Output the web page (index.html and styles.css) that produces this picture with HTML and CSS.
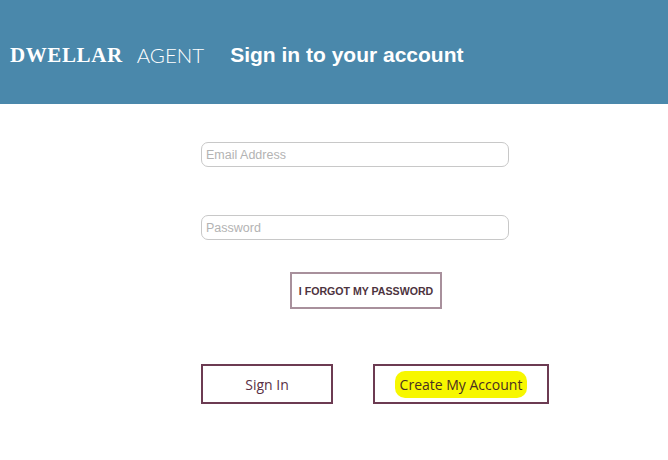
FILE: index.html
```html
<!DOCTYPE html>
<html>
<head>
<meta charset="utf-8">
<link rel="stylesheet" href="styles.css">
</head>
<body>
<header class="topbar">
  <span class="brand">DWELLAR</span>
  <span class="agent">AGENT</span>
  <span class="title">Sign in to your account</span>
</header>
<main class="form">
  <div class="field"><span class="ph">Email Address</span></div>
  <div class="field field-pw"><span class="ph">Password</span></div>
  <div class="forgot">I FORGOT MY PASSWORD</div>
  <div class="actions">
    <div class="btn btn-signin">Sign In</div>
    <div class="btn btn-create"><span class="hl">Create My Account</span></div>
  </div>
</main>
</body>
</html>
```
FILE: styles.css
```css
html, body { margin: 0; padding: 0; background: #fff; }
body { width: 668px; height: 460px; overflow: hidden; }
.topbar {
  height: 104px;
  background: #4a88ab;
  display: flex;
  align-items: center;
  padding-left: 10px;
  color: #fff;
  box-sizing: border-box;
  padding-top: 6px;
}
.brand {
  font-family: "Liberation Serif", serif;
  font-weight: bold;
  font-size: 21px;
  letter-spacing: 0.6px;
}
.agent {
  font-family: "Lato", sans-serif;
  font-weight: 300;
  font-size: 20.5px;
  margin-left: 14px;
}
.title {
  font-family: "Liberation Sans", Arial, sans-serif;
  font-weight: bold;
  font-size: 21px;
  margin-left: 26px;
}
.form {
  margin-left: 201px;
  padding-top: 38px;
  display: flex;
  flex-direction: column;
  font-family: "Liberation Sans", Arial, sans-serif;
}
.field {
  width: 308px;
  height: 25px;
  box-sizing: border-box;
  border: 1px solid #c8c8c8;
  border-radius: 7px;
  display: flex;
  align-items: center;
  padding-left: 4px;
}
.field-pw { margin-top: 48px; }
.ph {
  font-family: "Liberation Sans", Arial, sans-serif;
  font-size: 12.5px;
  color: #b3b3b3;
}
.forgot {
  margin-top: 32px;
  margin-left: 89px;
  width: 152px;
  height: 37px;
  box-sizing: border-box;
  border: 2px solid #a8909c;
  display: flex;
  align-items: center;
  justify-content: center;
  font-weight: bold;
  font-size: 10.6px;
  color: #4d3340;
}
.actions {
  margin-top: 55px;
  display: flex;
  gap: 40px;
}
.btn {
  height: 40px;
  box-sizing: border-box;
  border: 2px solid #6c3b52;
  display: flex;
  align-items: center;
  justify-content: center;
  font-family: "Open Sans", sans-serif;
  font-size: 14px;
  color: #5a3044;
}
.btn-signin { width: 132px; }
.btn-create { width: 176px; }
.hl {
  background: #f7f700;
  border-radius: 10px;
  padding: 4px 5px;
  color: #4a3020;
}
```
